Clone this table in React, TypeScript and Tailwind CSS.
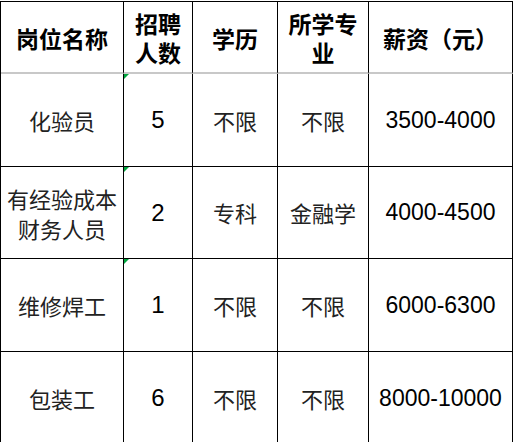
import React from "react";

const rows = [
  { name: ["化验员"], count: "5", edu: "不限", major: "不限", pay: "3500-4000" },
  { name: ["有经验成本", "财务人员"], count: "2", edu: "专科", major: "金融学", pay: "4000-4500" },
  { name: ["维修焊工"], count: "1", edu: "不限", major: "不限", pay: "6000-6300" },
  { name: ["包装工"], count: "6", edu: "不限", major: "不限", pay: "8000-10000" },
];

const cjk = "font-['Noto_Sans_CJK_SC',sans-serif]";
const num = "font-['Liberation_Sans',Arial,sans-serif]";

function Mark() {
  return (
    <span className="absolute top-0 left-0 w-0 h-0 border-t-[5px] border-r-[5px] border-t-green-600 border-r-transparent" />
  );
}

export default function App() {
  const cell = "relative flex flex-col items-center justify-center text-center border-r border-b border-black";
  return (
    <div className="w-[513px] h-[442px] overflow-hidden bg-white pt-px">
      <div className="grid grid-cols-[123px_69px_85px_91px_144px] grid-rows-[72px_93px_92px_93px_93px] border-t border-l border-black w-[513px] text-black">
        {[["岗位名称"], ["招聘", "人数"], ["学历"], ["所学专", "业"], ["薪资（元）"]].map((h, i) => (
          <div key={i} className={`${cell} border-b-2 border-b-[#c8c8c8] ${cjk} font-bold text-[23px] leading-[29px] pt-0.5`}>
            {h.map((l) => (
              <span key={l}>{l}</span>
            ))}
          </div>
        ))}
        {rows.map((r, i) => (
          <React.Fragment key={i}>
            <div className={`${cell} ${cjk} text-[22px] leading-[30px] text-[#222]`}>
              {r.name.map((l) => (
                <span key={l}>{l}</span>
              ))}
            </div>
            <div className={`${cell} ${num} text-[24px]`}>
              {i < 3 && <Mark />}
              {r.count}
            </div>
            <div className={`${cell} ${cjk} text-[22px] text-[#222]`}>{r.edu}</div>
            <div className={`${cell} ${cjk} text-[22px] text-[#222]`}>{r.major}</div>
            <div className={`${cell} ${num} text-[23px]`}>{r.pay}</div>
          </React.Fragment>
        ))}
      </div>
    </div>
  );
}
